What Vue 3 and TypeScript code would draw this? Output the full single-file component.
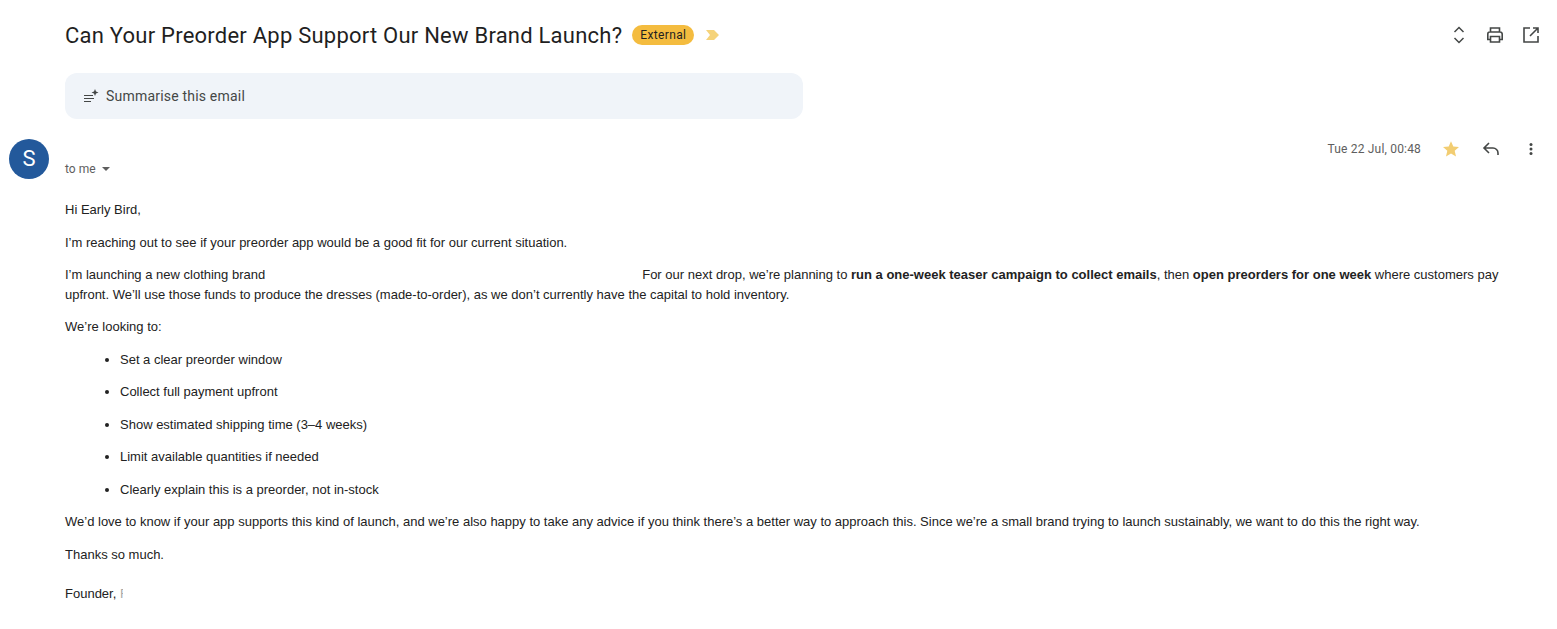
<script setup lang="ts">
const items: string[] = [
  'Set a clear preorder window',
  'Collect full payment upfront',
  'Show estimated shipping time (3–4 weeks)',
  'Limit available quantities if needed',
  'Clearly explain this is a preorder, not in-stock',
]
</script>

<template>
  <div class="page">
    <header class="subject-row">
      <h1 class="subject">Can Your Preorder App Support Our New Brand Launch?</h1>
      <span class="badge">External</span>
      <svg class="marker" width="14" height="10" viewBox="0 0 14 10"><path d="M0 0h8l5 5-5 5H0l4-5z" fill="#f5d37a" /></svg>
      <div class="top-actions">
        <svg width="20" height="24" viewBox="0 0 20 24" fill="none" stroke="#444746" stroke-width="1.5"><path d="M5.500 9 10 4.500 14.500 9M5.500 15 10 19.500 14.500 15" /></svg>
        <svg width="20" height="20" viewBox="0 0 20 20" fill="none" stroke="#444746" stroke-width="1.6"><path d="M5.500 7V3h9v4M5.500 14.500H2.800V9a2 2 0 0 1 2-2h10.400a2 2 0 0 1 2 2v5.500H14.500" /><path d="M5.500 11.500h9v5.500h-9z" /></svg>
        <svg width="20" height="20" viewBox="0 0 20 20" fill="none" stroke="#444746" stroke-width="1.6"><path d="M9 3H3v14h14v-6M12 3h5v5M17 3l-8 8" /></svg>
      </div>
    </header>

    <div class="summary">
      <svg width="16" height="18" viewBox="0 0 16 18" fill="none" stroke="#444746" stroke-width="1.100"><path d="M1 8.500h9M1 11.500h10M1 14.500h7" /><path d="M12 2l1 2.500 2.500 1-2.500 1-1 2.500-1-2.500-2.500-1 2.500-1z" fill="#444746" stroke="none" /></svg>
      <span>Summarise this email</span>
    </div>

    <section class="message">
      <div class="avatar">S</div>
      <div class="content">
        <div class="meta">
          <div class="recipient">to me <span class="caret"></span></div>
          <div class="meta-right">
            <span class="date">Tue 22 Jul, 00:48</span>
            <svg class="star" width="18" height="18" viewBox="0 0 18 18"><path d="M9 1.200l2.300 5.300 5.700.5-4.300 3.800 1.300 5.600L9 13.500l-5 2.900 1.300-5.600L1 7l5.700-.5z" fill="#f2cd72" /></svg>
            <svg class="reply" width="20" height="20" viewBox="0 0 20 20" fill="none" stroke="#444746" stroke-width="1.600"><path d="M8 4 3 9l5 5M3 9h9a5 5 0 0 1 5 5v2" /></svg>
            <svg class="more" width="16" height="16" viewBox="0 0 16 16" fill="#444746"><circle cx="8" cy="3.500" r="1.500" /><circle cx="8" cy="8" r="1.500" /><circle cx="8" cy="12.500" r="1.500" /></svg>
          </div>
        </div>
        <div class="body">
          <p class="greeting">Hi Early Bird,</p>
          <p class="intro">I’m reaching out to see if your preorder app would be a good fit for our current situation.</p>
          <p>I’m launching a new clothing brand<span class="redacted"></span>For our next drop, we’re planning to <b>run a one-week teaser campaign to collect emails</b>, then <b>open preorders for one week</b> where customers pay upfront. We’ll use those funds to produce the dresses (made-to-order), as we don’t currently have the capital to hold inventory.</p>
          <p>We’re looking to:</p>
          <ul>
            <li v-for="item in items" :key="item">{{ item }}</li>
          </ul>
          <p>We’d love to know if your app supports this kind of launch, and we’re also happy to take any advice if you think there’s a better way to approach this. Since we’re a small brand trying to launch sustainably, we want to do this the right way.</p>
          <p>Thanks so much.</p>
          <p class="signature">Founder, <span class="cut">F</span></p>
        </div>
      </div>
    </section>
  </div>
</template>

<style>
html, body { margin: 0; background: #fff; }
</style>

<style scoped>
.page {
  width: 1557px;
  height: 629px;
  overflow: hidden;
  box-sizing: border-box;
  padding: 18px 0 0 0;
  font-family: "Liberation Sans", Arial, sans-serif;
  color: #222;
}
.subject-row {
  display: flex;
  align-items: center;
  height: 34px;
  padding: 0 16px 0 65px;
}
.subject {
  margin: 0;
  font-family: Roboto, sans-serif;
  font-weight: 400;
  font-size: 22px;
  letter-spacing: 0.23px;
  color: #1f1f1f;
}
.badge {
  margin-left: 10px;
  height: 20px;
  line-height: 20px;
  padding: 0 8px;
  border-radius: 10px;
  background: #f4bc3f;
  font-family: Roboto, sans-serif;
  font-size: 12px;
  letter-spacing: 0.35px;
  color: #1f1f1f;
}
.marker { margin-left: 12px; }
.top-actions {
  margin-left: auto;
  display: flex;
  align-items: center;
  gap: 16px;
}
.summary {
  margin: 21px 0 0 65px;
  width: 738px;
  height: 46px;
  box-sizing: border-box;
  padding: 0 18px;
  display: flex;
  align-items: center;
  gap: 7px;
  background: #f0f4f9;
  border-radius: 12px;
  font-family: Roboto, sans-serif;
  font-size: 14px;
  letter-spacing: 0.2px;
  color: #444746;
}
.message {
  display: flex;
  margin-top: 20px;
}
.avatar {
  margin-left: 9px;
  width: 40px;
  height: 40px;
  flex: none;
  border-radius: 50%;
  background: #23599b;
  color: #fff;
  font-family: Roboto, sans-serif;
  font-size: 22px;
  line-height: 40px;
  text-align: center;
}
.content {
  margin-left: 16px;
  flex: 1;
  padding-right: 18px;
}
.meta {
  display: flex;
  justify-content: space-between;
  height: 60.500px;
}
.recipient {
  margin-top: 23px;
  font-family: Roboto, sans-serif;
  font-size: 12px;
  line-height: 14px;
  height: 14px;
  color: #5e5e5e;
}
.caret {
  display: inline-block;
  margin-left: 3px;
  vertical-align: 2px;
  border-left: 4px solid transparent;
  border-right: 4px solid transparent;
  border-top: 4px solid #5e5e5e;
}
.meta-right {
  display: flex;
  align-items: flex-start;
  height: 20px;
}
.date {
  font-family: Roboto, sans-serif;
  font-size: 12px;
  line-height: 20px;
  letter-spacing: 0.18px;
  color: #5e5e5e;
}
.star { margin-left: 21px; margin-top: 1px; }
.reply { margin-left: 21px; }
.more { margin-left: 22px; margin-top: 2px; }
.body {
  font-size: 13px;
  line-height: 20px;
  color: #222;
}
.body p { margin: 0 0 12.500px; }
.body .greeting { margin-bottom: 13px; }
.body .intro { margin-bottom: 12px; }
.body ul { margin: 0 0 12.500px; padding: 0 0 0 55px; }
.body li { margin: 0 0 12.500px; }
.body li:last-child { margin-bottom: 0; }
.redacted {
  display: inline-block;
  width: 377px;
}
.signature { padding-top: 6.500px; }
.cut {
  display: inline-block;
  width: 3px;
  overflow: clip;
  color: #aaa;
}
</style>
